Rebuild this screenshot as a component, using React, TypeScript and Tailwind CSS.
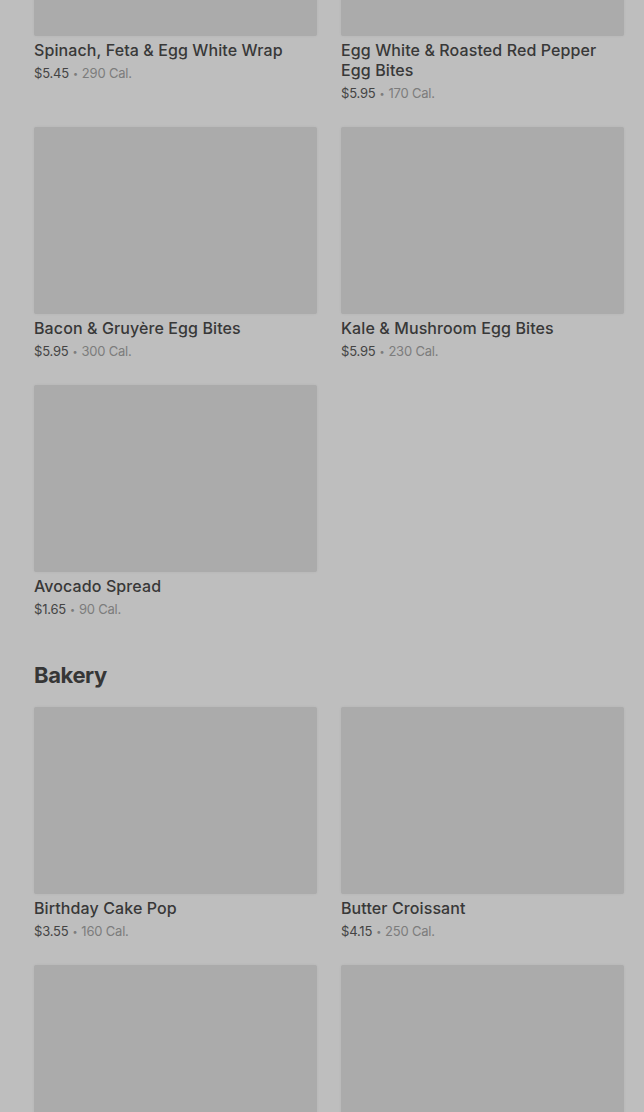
import React from 'react'

// ─── Types ────────────────────────────────────────────────────────────────────

interface MenuItem {
  name: string
  price: string
  cal: number
}

interface MenuSection {
  title?: string
  items: MenuItem[]
}

// ─── Data ─────────────────────────────────────────────────────────────────────

const sections: MenuSection[] = [
  {
    items: [
      { name: 'Spinach, Feta & Egg White Wrap', price: '$5.45', cal: 290 },
      { name: 'Egg White & Roasted Red Pepper Egg Bites', price: '$5.95', cal: 170 },
      { name: 'Bacon & Gruyère Egg Bites', price: '$5.95', cal: 300 },
      { name: 'Kale & Mushroom Egg Bites', price: '$5.95', cal: 230 },
      { name: 'Avocado Spread', price: '$1.65', cal: 90 },
    ],
  },
  {
    title: 'Bakery',
    items: [
      { name: 'Birthday Cake Pop', price: '$3.55', cal: 160 },
      { name: 'Butter Croissant', price: '$4.15', cal: 250 },
      { name: 'Chocolate Croissant', price: '$4.45', cal: 300 },
      { name: 'Cheese Danish', price: '$3.95', cal: 290 },
    ],
  },
]

// ─── Components ───────────────────────────────────────────────────────────────

function ProductCard({ item }: { item: MenuItem }) {
  return (
    <div className="flex flex-col">
      <div className="h-[187px] w-full rounded-[2px] bg-[#ababab] shadow-[0_0_3px_rgba(0,0,0,0.06)]" />
      <p className="mt-1 text-[16px] leading-5 font-medium tracking-[0.1px] text-[#383838]">{item.name}</p>
      <p className="mt-1 text-[13px] leading-[19px] tracking-[-0.2px]">
        <span className="text-[#444444]">{item.price}</span>
        <span className="text-[#7c7c7c]">
          <span className="mx-[4px] text-[9px] align-[1px]">•</span>
          {item.cal} Cal.
        </span>
      </p>
    </div>
  )
}

export default function App() {
  return (
    <div
      className="h-[1112px] overflow-hidden bg-[#bebebe] pl-[34px] pr-[20px]"
      style={{ fontFamily: 'Inter, "Noto Sans", sans-serif' }}
    >
      <div className="-mt-[151px] flex flex-col">
        {sections.map((section, i) => (
          <section key={i} className={i > 0 ? 'mt-[42px]' : ''}>
            {section.title && (
              <h2 className="mb-[18px] text-[22px] leading-7 font-bold tracking-[-0.4px] text-[#363636]">
                {section.title}
              </h2>
            )}
            <div className="grid grid-cols-2 gap-x-6 gap-y-6">
              {section.items.map((item) => (
                <ProductCard key={item.name} item={item} />
              ))}
            </div>
          </section>
        ))}
      </div>
    </div>
  )
}
